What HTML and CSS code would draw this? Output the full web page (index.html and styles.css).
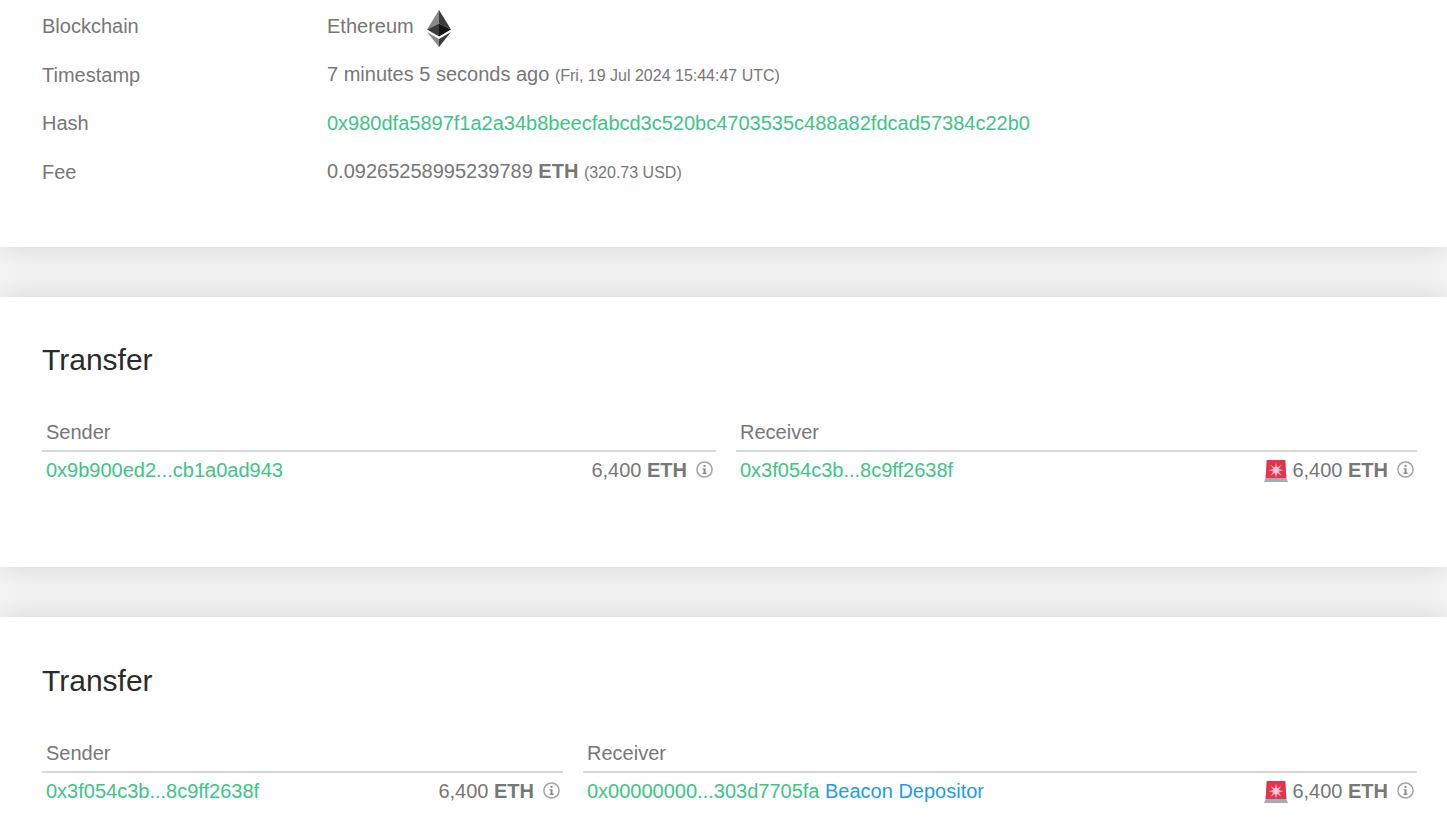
FILE: index.html
```html
<!DOCTYPE html>
<html lang="en">
<head>
<meta charset="utf-8">
<title>Transaction</title>
<link rel="stylesheet" href="styles.css">
</head>
<body>
<svg class="defs" width="0" height="0" aria-hidden="true">
  <symbol id="info" viewBox="0 0 17 17">
    <circle cx="8.5" cy="8.5" r="7.6" fill="none" stroke="#a6a6a8" stroke-width="1.5"/>
    <rect x="7.5" y="3.9" width="2" height="2" fill="#8a8a8e"/>
    <path d="M6.6 7.2H9.5V11.6H10.5V12.9H6.6V11.6H7.6V8.5H6.6Z" fill="#8a8a8e"/>
  </symbol>
  <symbol id="siren" viewBox="0 0 24 24">
    <path d="M2.6 1H21.4L22.4 19H1.6Z" fill="#e2334f"/>
    <path d="M12 3.5l1.2 4.9 4.3-2.7-2.7 4.3 4.9 1.2-4.9 1.2 2.7 4.3-4.3-2.7-1.2 4.9-1.2-4.9-4.3 2.7 2.7-4.3-4.9-1.2 4.9-1.2-2.7-4.3 4.3 2.7Z" fill="#f5a9b6"/>
    <circle cx="12" cy="11.2" r="3" fill="#f8c4cd"/>
    <path d="M1.6 19H22.4L24 23H0Z" fill="#a3adb5"/>
  </symbol>
</svg>

<section class="card card-info">
  <div class="row">
    <span class="label">Blockchain</span>
    <span class="value value-chain">Ethereum<svg class="eth" width="26" height="38" viewBox="0 0 26 38" aria-hidden="true">
        <path d="M13 0L1 19.5L13 13.5Z" fill="#8a8a8a"/>
        <path d="M13 0L25 19.5L13 13.5Z" fill="#3c3c3b"/>
        <path d="M13 13.5L1 19.5L13 26.5Z" fill="#3c3c3b"/>
        <path d="M13 13.5L25 19.5L13 26.5Z" fill="#141414"/>
        <path d="M1 22L13 29V37Z" fill="#8a8a8a"/>
        <path d="M25 22L13 29V37Z" fill="#3c3c3b"/>
      </svg></span>
  </div>
  <div class="row">
    <span class="label">Timestamp</span>
    <span class="value">7 minutes 5 seconds ago <small>(Fri, 19 Jul 2024 15:44:47 UTC)</small></span>
  </div>
  <div class="row">
    <span class="label">Hash</span>
    <a class="value link" href="#">0x980dfa5897f1a2a34b8beecfabcd3c520bc4703535c488a82fdcad57384c22b0</a>
  </div>
  <div class="row">
    <span class="label">Fee</span>
    <span class="value">0.09265258995239789 <b>ETH</b> <small>(320.73 USD)</small></span>
  </div>
</section>

<section class="card card-transfer">
  <h2>Transfer</h2>
  <div class="parties">
    <div class="party party-a">
      <div class="party-head">Sender</div>
      <div class="party-line">
        <a class="link" href="#">0x9b900ed2...cb1a0ad943</a>
        <span class="amount">6,400 <b>ETH</b><svg class="info"><use href="#info"/></svg></span>
      </div>
    </div>
    <div class="party party-b">
      <div class="party-head">Receiver</div>
      <div class="party-line">
        <a class="link" href="#">0x3f054c3b...8c9ff2638f</a>
        <span class="amount"><svg class="siren"><use href="#siren"/></svg>6,400 <b>ETH</b><svg class="info"><use href="#info"/></svg></span>
      </div>
    </div>
  </div>
</section>

<section class="card card-transfer card-last">
  <h2>Transfer</h2>
  <div class="parties">
    <div class="party party-c">
      <div class="party-head">Sender</div>
      <div class="party-line">
        <a class="link" href="#">0x3f054c3b...8c9ff2638f</a>
        <span class="amount">6,400 <b>ETH</b><svg class="info"><use href="#info"/></svg></span>
      </div>
    </div>
    <div class="party party-d">
      <div class="party-head">Receiver</div>
      <div class="party-line">
        <span><a class="link" href="#">0x00000000...303d7705fa</a> <a class="tag" href="#">Beacon Depositor</a></span>
        <span class="amount"><svg class="siren"><use href="#siren"/></svg>6,400 <b>ETH</b><svg class="info"><use href="#info"/></svg></span>
      </div>
    </div>
  </div>
</section>
</body>
</html>
```
FILE: styles.css
```css
* { box-sizing: border-box; }
html, body { height: 100%; }
body {
  margin: 0;
  height: 831px;
  overflow: hidden;
  background: #f4f4f4;
  color: #777;
  font-family: "Liberation Sans", Arial, sans-serif;
  font-size: 20px;
  line-height: 24px;
}
.defs { position: absolute; }
a { text-decoration: none; }
.card {
  background: #fff;
  box-shadow: 0 0 30px rgba(0, 0, 0, 0.13);
  padding: 0 30px 0 42px;
  margin-bottom: 50px;
  position: relative;
}
.card-info { height: 247px; padding-top: 2px; }
.card-transfer { height: 270px; padding-top: 45px; }
.card-last { margin-bottom: 0; height: 214px; padding-top: 46px; }
.row { display: flex; height: 48.5px; align-items: center; }
.label { width: 285px; flex: none; }
.value { white-space: pre; }
.value-chain { display: flex; align-items: center; }
.value b, .amount b { font-weight: 700; }
small { font-size: 16px; }
.link { color: #3ec585; }
.tag { color: #1e9bee; }
.eth { margin: 5px 0 0 12px; }
h2 {
  margin: 0;
  height: 36px;
  font-size: 30px;
  line-height: 36px;
  font-weight: 400;
  color: #2b2b2b;
}
.parties { display: flex; gap: 20px; margin-top: 35px; }
.party-a { width: 674px; }
.party-b { width: 681px; }
.party-c { width: 521px; }
.party-d { width: 834px; }
.party-head {
  height: 39px;
  padding: 7px 3px 0 4px;
  border-bottom: 2px solid #d9d9d9;
  line-height: 24px;
}
.party-line {
  display: flex;
  justify-content: space-between;
  align-items: center;
  height: 35px;
  padding: 0 3px 0 4px;
}
.amount { display: flex; align-items: center; white-space: pre; }
.info { width: 17px; height: 17px; margin-left: 9px; }
.siren { width: 24px; height: 24px; margin: 2px 4px 0 0; }
```
